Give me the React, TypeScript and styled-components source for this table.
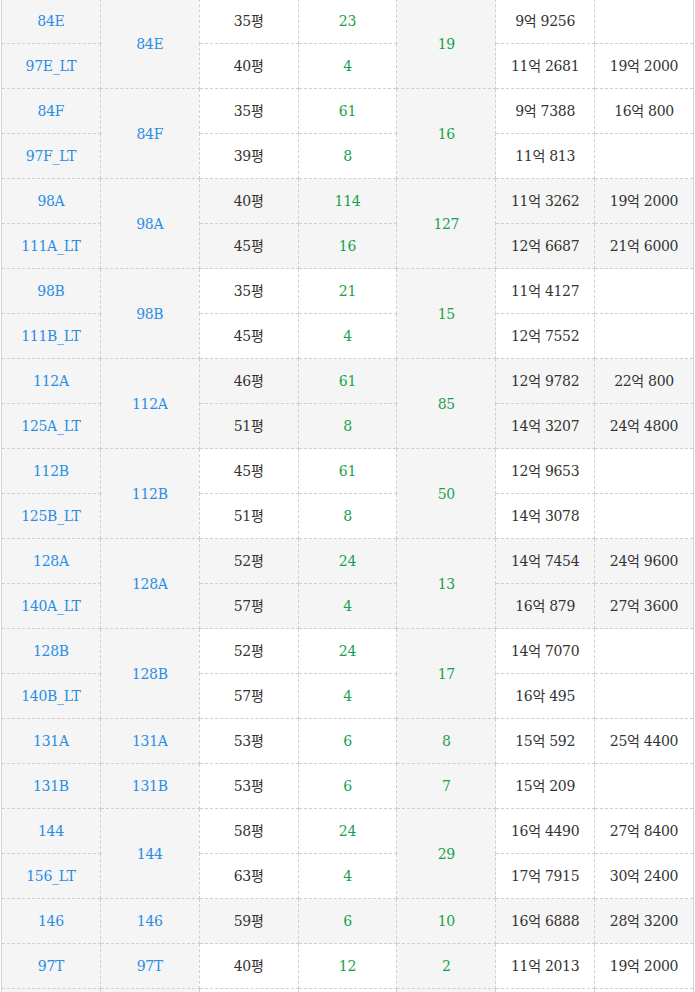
import styled, { createGlobalStyle } from "styled-components";
import { FC } from "react";

const GlobalStyle = createGlobalStyle`
    html, body {
        margin: 0;
        padding: 0;
        background: #fff;
    }
    body {
        font-family: "DejaVu Serif", "Noto Sans CJK KR", serif;
        color: #333;
    }
`;

const Wrapper = styled['div']`
    padding: 0 1px;
    margin-top: -2px;
    overflow: hidden;
`;

const Table = styled['table']`
    width: 693px;
    border-collapse: collapse;
    table-layout: fixed;
    border: 1px solid #d4d4d4;
`;

type Tone = "model" | "area" | "count" | "price";

const Cell = styled['td']<{ $tone: Tone; $shaded: boolean }>`
    height: 44px;
    padding: 0;
    text-align: center;
    vertical-align: middle;
    border: 1px dashed #cfcfcf;
    font-size: 14px;
    line-height: 18px;
    letter-spacing: -0.3px;
    white-space: nowrap;
    background-color: ${({ $shaded }) => ($shaded ? "#f5f5f5" : "#fff")};
    color: ${({ $tone }) =>
        $tone === "model" ? "#2a8de3" : $tone === "count" ? "#16a24a" : "#333"};
`;

interface IUnit {
    name: string;
    area: string;
    count: string;
    price: string;
    top: string;
}

interface IGroup {
    type: string;
    total: string;
    shaded: boolean;
    units: IUnit[];
}

const groups: IGroup[] = [
    { type: "84E", total: "19", shaded: false, units: [
        { name: "84E", area: "35평", count: "23", price: "9억 9256", top: "" },
        { name: "97E_LT", area: "40평", count: "4", price: "11억 2681", top: "19억 2000" },
    ] },
    { type: "84F", total: "16", shaded: false, units: [
        { name: "84F", area: "35평", count: "61", price: "9억 7388", top: "16억 800" },
        { name: "97F_LT", area: "39평", count: "8", price: "11억 813", top: "" },
    ] },
    { type: "98A", total: "127", shaded: true, units: [
        { name: "98A", area: "40평", count: "114", price: "11억 3262", top: "19억 2000" },
        { name: "111A_LT", area: "45평", count: "16", price: "12억 6687", top: "21억 6000" },
    ] },
    { type: "98B", total: "15", shaded: false, units: [
        { name: "98B", area: "35평", count: "21", price: "11억 4127", top: "" },
        { name: "111B_LT", area: "45평", count: "4", price: "12억 7552", top: "" },
    ] },
    { type: "112A", total: "85", shaded: true, units: [
        { name: "112A", area: "46평", count: "61", price: "12억 9782", top: "22억 800" },
        { name: "125A_LT", area: "51평", count: "8", price: "14억 3207", top: "24억 4800" },
    ] },
    { type: "112B", total: "50", shaded: false, units: [
        { name: "112B", area: "45평", count: "61", price: "12억 9653", top: "" },
        { name: "125B_LT", area: "51평", count: "8", price: "14억 3078", top: "" },
    ] },
    { type: "128A", total: "13", shaded: true, units: [
        { name: "128A", area: "52평", count: "24", price: "14억 7454", top: "24억 9600" },
        { name: "140A_LT", area: "57평", count: "4", price: "16억 879", top: "27억 3600" },
    ] },
    { type: "128B", total: "17", shaded: false, units: [
        { name: "128B", area: "52평", count: "24", price: "14억 7070", top: "" },
        { name: "140B_LT", area: "57평", count: "4", price: "16악 495", top: "" },
    ] },
    { type: "131A", total: "8", shaded: false, units: [
        { name: "131A", area: "53평", count: "6", price: "15억 592", top: "25억 4400" },
    ] },
    { type: "131B", total: "7", shaded: false, units: [
        { name: "131B", area: "53평", count: "6", price: "15억 209", top: "" },
    ] },
    { type: "144", total: "29", shaded: false, units: [
        { name: "144", area: "58평", count: "24", price: "16억 4490", top: "27억 8400" },
        { name: "156_LT", area: "63평", count: "4", price: "17억 7915", top: "30억 2400" },
    ] },
    { type: "146", total: "10", shaded: true, units: [
        { name: "146", area: "59평", count: "6", price: "16억 6888", top: "28억 3200" },
    ] },
    { type: "97T", total: "2", shaded: false, units: [
        { name: "97T", area: "40평", count: "12", price: "11억 2013", top: "19억 2000" },
    ] },
    { type: "", total: "", shaded: false, units: [
        { name: "", area: "", count: "", price: "", top: "" },
    ] },
];

const GroupRows: FC<{ group: IGroup }> = ({ group }) => {
    const span = group.units.length;
    return (
        <>
            {group.units.map((unit, i) => (
                <tr key={unit.name + i}>
                    <Cell $tone="model" $shaded>{unit.name}</Cell>
                    {i === 0 && (
                        <Cell $tone="model" $shaded rowSpan={span}>{group.type}</Cell>
                    )}
                    <Cell $tone="area" $shaded={group.shaded}>{unit.area}</Cell>
                    <Cell $tone="count" $shaded={group.shaded}>{unit.count}</Cell>
                    {i === 0 && (
                        <Cell $tone="count" $shaded rowSpan={span}>{group.total}</Cell>
                    )}
                    <Cell $tone="price" $shaded={group.shaded}>{unit.price}</Cell>
                    <Cell $tone="price" $shaded={group.shaded}>{unit.top}</Cell>
                </tr>
            ))}
        </>
    );
};

const App: FC = () => {
    return (
        <>
            <GlobalStyle />
            <Wrapper>
                <Table>
                    <tbody>
                        {groups.map((group, i) => (
                            <GroupRows key={group.type + i} group={group} />
                        ))}
                    </tbody>
                </Table>
            </Wrapper>
        </>
    );
};

export default App;
